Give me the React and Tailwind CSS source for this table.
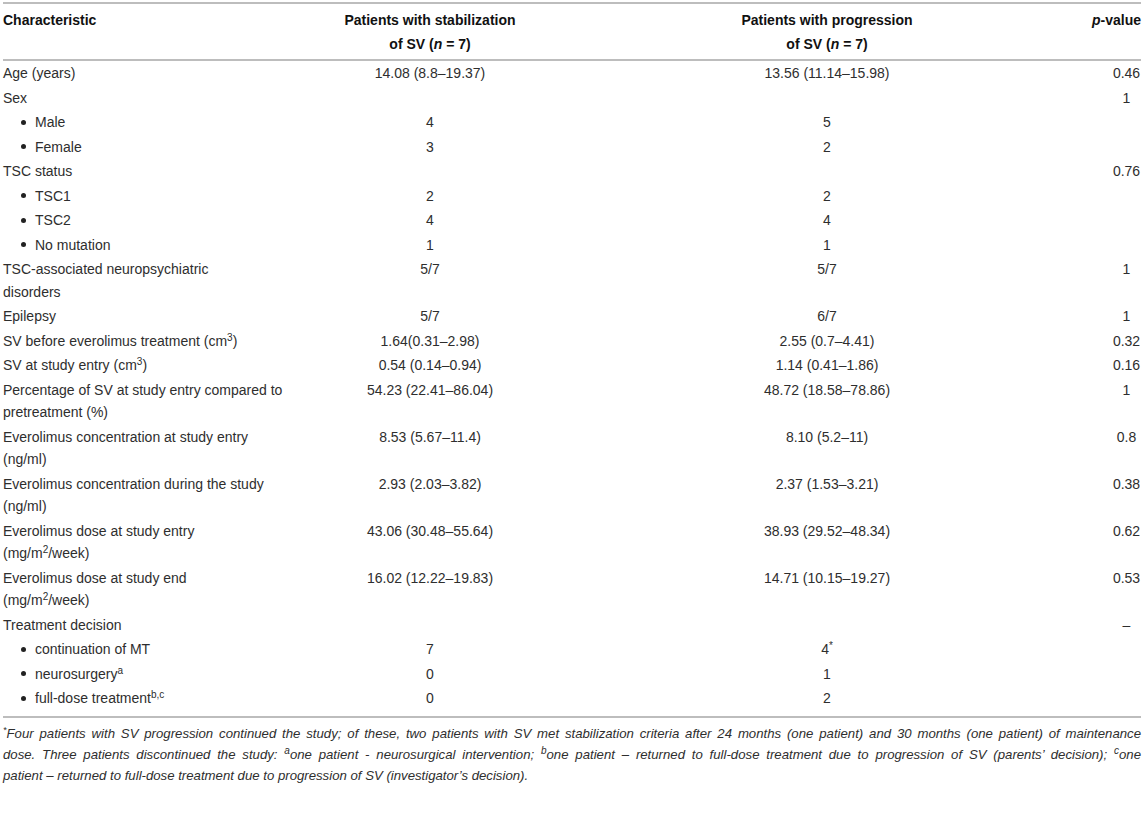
import React from 'react';

const rows = [
  { label: 'Age (years)', a: '14.08 (8.8–19.37)', b: '13.56 (11.14–15.98)', p: '0.46' },
  { label: 'Sex', a: '', b: '', p: '1' },
  { label: 'Male', bullet: true, a: '4', b: '5', p: '' },
  { label: 'Female', bullet: true, a: '3', b: '2', p: '' },
  { label: 'TSC status', a: '', b: '', p: '0.76' },
  { label: 'TSC1', bullet: true, a: '2', b: '2', p: '' },
  { label: 'TSC2', bullet: true, a: '4', b: '4', p: '' },
  { label: 'No mutation', bullet: true, a: '1', b: '1', p: '' },
  { label: <>TSC-associated neuropsychiatric<br />disorders</>, a: '5/7', b: '5/7', p: '1' },
  { label: 'Epilepsy', a: '5/7', b: '6/7', p: '1' },
  { label: <>SV before everolimus treatment (cm<sup className="text-[10px]">3</sup>)</>, a: '1.64(0.31–2.98)', b: '2.55 (0.7–4.41)', p: '0.32' },
  { label: <>SV at study entry (cm<sup className="text-[10px]">3</sup>)</>, a: '0.54 (0.14–0.94)', b: '1.14 (0.41–1.86)', p: '0.16' },
  { label: <>Percentage of SV at study entry compared to<br />pretreatment (%)</>, a: '54.23 (22.41–86.04)', b: '48.72 (18.58–78.86)', p: '1' },
  { label: <>Everolimus concentration at study entry<br />(ng/ml)</>, a: '8.53 (5.67–11.4)', b: '8.10 (5.2–11)', p: '0.8' },
  { label: <>Everolimus concentration during the study<br />(ng/ml)</>, a: '2.93 (2.03–3.82)', b: '2.37 (1.53–3.21)', p: '0.38' },
  { label: <>Everolimus dose at study entry<br />(mg/m<sup className="text-[10px]">2</sup>/week)</>, a: '43.06 (30.48–55.64)', b: '38.93 (29.52–48.34)', p: '0.62' },
  { label: <>Everolimus dose at study end<br />(mg/m<sup className="text-[10px]">2</sup>/week)</>, a: '16.02 (12.22–19.83)', b: '14.71 (10.15–19.27)', p: '0.53' },
  { label: 'Treatment decision', a: '', b: '', p: '–' },
  { label: 'continuation of MT', bullet: true, a: '7', b: <>4<sup className="text-[10px]">*</sup></>, p: '' },
  { label: <>neurosurgery<sup className="text-[10px]">a</sup></>, bullet: true, a: '0', b: '1', p: '' },
  { label: <>full-dose treatment<sup className="text-[10px]">b,c</sup></>, bullet: true, a: '0', b: '2', p: '' },
];

export default function App() {
  return (
    <div className="min-h-screen bg-white px-[3px] pt-[2px] text-[#2e2e2e] font-['Liberation_Sans',Arial,sans-serif]">
      <table className="table-fixed w-[1138px] border-collapse text-[14px] leading-[22.5px]">
        <colgroup>
          <col className="w-[287px]" />
          <col className="w-[280px]" />
          <col className="w-[514px]" />
          <col className="w-[57px]" />
        </colgroup>
        <thead>
          <tr className="border-t-2 border-b-2 border-[#bdbdbd] text-[#111] leading-[23.5px]">
            <th className="text-left align-top font-bold pt-[5px] pb-[3px]">Characteristic</th>
            <th className="text-center align-top font-bold pt-[5px] pb-[3px]">
              Patients with stabilization
              <br />
              of SV (<i>n</i> = 7)
            </th>
            <th className="text-center align-top font-bold pt-[5px] pb-[3px]">
              Patients with progression
              <br />
              of SV (<i>n</i> = 7)
            </th>
            <th className="text-right align-top font-bold pt-[5px] pb-[3px] whitespace-nowrap">
              <i>p</i>-value
            </th>
          </tr>
        </thead>
        <tbody className="border-b-2 border-[#bdbdbd]">
          {rows.map((r, i) => (
            <tr key={i}>
              <td className="py-px align-top whitespace-nowrap">
                {r.bullet ? (
                  <span className="flex items-center">
                    <span className="ml-[18px] mr-[9px] w-[5px] h-[5px] rounded-full bg-[#222]" />
                    <span>{r.label}</span>
                  </span>
                ) : (
                  r.label
                )}
              </td>
              <td className="py-px align-top text-center">{r.a}</td>
              <td className="py-px align-top text-center">{r.b}</td>
              <td className="py-px align-top text-center pl-[28px]">{r.p}</td>
            </tr>
          ))}
          <tr>
            <td colSpan={4} className="h-[6px]" />
          </tr>
        </tbody>
      </table>
      <div className="w-[1138px] pt-[5px] italic text-[13.2px] leading-[21px] text-[#2e2e2e]">
        <div className="whitespace-nowrap text-justify [text-align-last:justify]">
          <sup className="text-[9px]">*</sup>Four patients with SV progression continued the study; of these, two patients with SV met stabilization criteria after 24 months (one patient) and 30 months (one patient) of maintenance
        </div>
        <div className="whitespace-nowrap text-justify [text-align-last:justify]">
          dose. Three patients discontinued the study: <sup className="text-[10px]">a</sup>one patient - neurosurgical intervention; <sup className="text-[10px]">b</sup>one patient – returned to full-dose treatment due to progression of SV (parents’ decision); <sup className="text-[10px]">c</sup>one
        </div>
        <div className="whitespace-nowrap">
          patient – returned to full-dose treatment due to progression of SV (investigator’s decision).
        </div>
      </div>
    </div>
  );
}
